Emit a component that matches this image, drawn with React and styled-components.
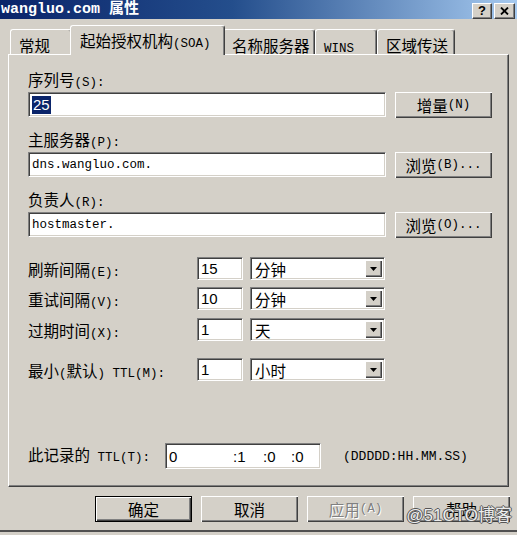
import styled, { createGlobalStyle } from "styled-components";

const GlobalStyle = createGlobalStyle`
  html, body {
    margin: 0;
    padding: 0;
    background: #d4d0c8;
  }
`;

const Window = styled.div`
  position: relative;
  width: 517px;
  height: 535px;
  display: flex;
  flex-direction: column;
  overflow: hidden;
  background: #d4d0c8;
  color: #000;
  font-family: "Noto Sans CJK SC", sans-serif;
  font-size: 15.5px;
`;

const TitleBar = styled.div`
  flex: none;
  height: 19px;
  display: flex;
  align-items: center;
  justify-content: space-between;
  padding: 0 2px 0 1px;
  background: linear-gradient(90deg, #0a246a 0%, #244e8c 45%, #a6caf0 100%);
`;

const TitleText = styled.div`
  color: #fff;
  font-family: "Liberation Mono", "Noto Sans CJK SC", monospace;
  font-weight: 700;
  font-size: 15px;
  line-height: 19px;
  white-space: nowrap;
`;

const CaptionButtons = styled.div`
  display: flex;
  gap: 2px;
  padding-top: 2px;
`;

const CaptionButton = styled.div`
  box-sizing: border-box;
  width: ${(p) => p.$w}px;
  height: 16px;
  display: flex;
  align-items: center;
  justify-content: center;
  background: #d4d0c8;
  border-top: 1px solid #fff;
  border-left: 1px solid #fff;
  border-right: 1px solid #404040;
  border-bottom: 1px solid #404040;
  box-shadow: inset -1px -1px #808080;
  font: 700 13px "Liberation Sans", sans-serif;
  line-height: 14px;
`;

const TabStrip = styled.div`
  flex: none;
  position: relative;
  z-index: 1;
  height: 29px;
  margin-top: 6px;
  padding-left: 10px;
  display: flex;
  align-items: flex-end;
`;

const Tab = styled.div`
  box-sizing: border-box;
  position: relative;
  z-index: ${(p) => (p.$active ? 2 : 1)};
  width: ${(p) => p.$w}px;
  height: ${(p) => (p.$active ? 30 : 25)}px;
  margin: 0 ${(p) => (p.$active ? -2 : 0)}px ${(p) => (p.$active ? -1 : 0)}px;
  padding: ${(p) => (p.$active ? "4px 0 0 9px" : "5px 0 0 8px")};
  background: #d4d0c8;
  border-top: 1px solid #fff;
  border-left: 1px solid #fff;
  border-right: 1px solid #404040;
  box-shadow: inset -1px 0 #808080;
  border-radius: 3px 3px 0 0;
  line-height: 20px;
  white-space: nowrap;
`;

const Mn = styled.span`
  font-family: "Liberation Mono", monospace;
  font-size: 12.5px;
`;

const Panel = styled.div`
  flex: none;
  box-sizing: border-box;
  height: 433px;
  margin: 0 8px;
  padding: 14px 0 0 19px;
  display: flex;
  flex-direction: column;
  border-top: 1px solid #fff;
  border-left: 1px solid #fff;
  border-right: 1px solid #404040;
  border-bottom: 1px solid #404040;
  box-shadow: inset -1px -1px #808080;
`;

const FieldGroup = styled.div`
  display: flex;
  flex-direction: column;
  gap: 3px;
  margin-bottom: 11px;
`;

const Label = styled.div`
  height: 20px;
  line-height: 20px;
  white-space: nowrap;
`;

const FieldRow = styled.div`
  display: flex;
  align-items: flex-start;
  gap: 9px;
`;

const sunken = `
  box-sizing: border-box;
  background: #fff;
  border-top: 1px solid #808080;
  border-left: 1px solid #808080;
  border-right: 1px solid #fff;
  border-bottom: 1px solid #fff;
  box-shadow: inset 1px 1px #404040, inset -1px -1px #d4d0c8;
`;

const raised = `
  box-sizing: border-box;
  background: #d4d0c8;
  box-shadow: inset 1px 1px #fff, inset -1px -1px #404040, inset -2px -2px #808080;
`;

const TextBox = styled.div`
  ${sunken}
  width: ${(p) => p.$w}px;
  height: ${(p) => p.$h || 25}px;
  display: flex;
  align-items: center;
  padding-left: 3px;
  font-family: ${(p) => (p.$mono ? '"Liberation Mono", monospace' : '"Liberation Sans", sans-serif')};
  font-size: ${(p) => (p.$mono ? 12.5 : 15)}px;
  white-space: nowrap;
  overflow: hidden;
`;

const Selected = styled.span`
  background: #0a246a;
  color: #fff;
  line-height: 18px;
  padding: 0 1px;
`;

const Button = styled.div`
  ${raised}
  width: ${(p) => p.$w || 97}px;
  height: 26px;
  display: flex;
  align-items: center;
  justify-content: center;
  line-height: 20px;
  white-space: nowrap;
  color: ${(p) => (p.$disabled ? "#808080" : "#000")};
  text-shadow: ${(p) => (p.$disabled ? "1px 1px #fff" : "none")};
  ${(p) => (p.$default ? "border: 1px solid #000;" : "")}
`;

const TimeRow = styled.div`
  display: grid;
  grid-template-columns: 162px 46px 135px;
  column-gap: 7px;
  align-items: center;
  height: 23px;
  margin-top: ${(p) => p.$mt}px;
`;

const Select = styled.div`
  ${sunken}
  height: 23px;
  display: flex;
  align-items: stretch;
  padding: 2px 2px 2px 0;
`;

const SelectValue = styled.div`
  flex: 1;
  padding-left: 4px;
  display: flex;
  align-items: center;
  line-height: 18px;
`;

const DropButton = styled.div`
  ${raised}
  width: 17px;
  display: flex;
  align-items: center;
  justify-content: center;
`;

const TtlRow = styled.div`
  display: flex;
  align-items: center;
  margin-top: 62px;
`;

const TtlLabel = styled.div`
  width: 137px;
  white-space: nowrap;
  line-height: 20px;
`;

const Seg = styled.span`
  display: inline-block;
  width: ${(p) => p.$w}px;
`;

const Hint = styled.div`
  margin-left: 22px;
  font-family: "Liberation Mono", monospace;
  font-size: 13px;
  white-space: nowrap;
`;

const ButtonBar = styled.div`
  flex: none;
  display: flex;
  justify-content: flex-end;
  gap: 9px;
  margin-top: 9px;
  padding-right: 7px;
`;

const FrameEdge = styled.div`
  flex: none;
  height: 2px;
  margin-top: 8px;
  background: #505050;
`;

const Watermark = styled.div`
  position: absolute;
  right: 5px;
  bottom: 9px;
  font-family: "Liberation Sans", "Noto Sans CJK SC", sans-serif;
  font-size: 17px;
  line-height: 20px;
  color: #ececec;
  text-shadow: -1px 0 #555, 1px 0 #555, 0 -1px #555, 0 1px #555;
  white-space: nowrap;
`;

const Arrow = () => (
  <svg width="7" height="4" viewBox="0 0 7 4">
    <path d="M0 0h7L3.5 4z" fill="#000" />
  </svg>
);

const CloseGlyph = () => (
  <svg width="9" height="8" viewBox="0 0 9 8">
    <path d="M1 0.5l7 7M8 0.5l-7 7" stroke="#000" strokeWidth="1.8" />
  </svg>
);

const fields = [
  { label: "序列号", key: "(S):", value: <Selected>25</Selected>, mono: false, btn: <>增量<Mn>(N)</Mn></> },
  { label: "主服务器", key: "(P):", value: "dns.wangluo.com.", mono: true, btn: <>浏览<Mn>(B)...</Mn></> },
  { label: "负责人", key: "(R):", value: "hostmaster.", mono: true, btn: <>浏览<Mn>(O)...</Mn></> },
];

const times = [
  { label: <>刷新间隔<Mn>(E):</Mn></>, n: "15", unit: "分钟", mt: 8 },
  { label: <>重试间隔<Mn>(V):</Mn></>, n: "10", unit: "分钟", mt: 7 },
  { label: <>过期时间<Mn>(X):</Mn></>, n: "1", unit: "天", mt: 8 },
  { label: <>最小<Mn>(</Mn>默认<Mn>) TTL(M):</Mn></>, n: "1", unit: "小时", mt: 17 },
];

export default function App() {
  return (
    <>
      <GlobalStyle />
      <Window>
        <TitleBar>
          <TitleText>wangluo.com 属性</TitleText>
          <CaptionButtons>
            <CaptionButton $w={20}>?</CaptionButton>
            <CaptionButton $w={21}>
              <CloseGlyph />
            </CaptionButton>
          </CaptionButtons>
        </TitleBar>

        <TabStrip>
          <Tab $w={62}>常规</Tab>
          <Tab $w={155} $active>
            起始授权机构<Mn>(SOA)</Mn>
          </Tab>
          <Tab $w={92}>名称服务器</Tab>
          <Tab $w={62}>
            <Mn>WINS</Mn>
          </Tab>
          <Tab $w={78}>区域传送</Tab>
        </TabStrip>

        <Panel>
          {fields.map((f) => (
            <FieldGroup key={f.label}>
              <Label>
                {f.label}
                <Mn>{f.key}</Mn>
              </Label>
              <FieldRow>
                <TextBox $w={358} $mono={f.mono}>
                  {f.value}
                </TextBox>
                <Button>{f.btn}</Button>
              </FieldRow>
            </FieldGroup>
          ))}

          {times.map((t, i) => (
            <TimeRow key={i} $mt={t.mt}>
              <Label>{t.label}</Label>
              <TextBox $w={46} $h={23}>
                {t.n}
              </TextBox>
              <Select>
                <SelectValue>{t.unit}</SelectValue>
                <DropButton>
                  <Arrow />
                </DropButton>
              </Select>
            </TimeRow>
          ))}

          <TtlRow>
            <TtlLabel>
              此记录的<Mn> TTL(T):</Mn>
            </TtlLabel>
            <TextBox $w={156} $h={26}>
              <Seg $w={64}>0</Seg>
              <Seg $w={30}>:1</Seg>
              <Seg $w={28}>:0</Seg>
              <Seg $w={20}>:0</Seg>
            </TextBox>
            <Hint>(DDDDD:HH.MM.SS)</Hint>
          </TtlRow>
        </Panel>

        <ButtonBar>
          <Button $default>确定</Button>
          <Button>取消</Button>
          <Button $disabled>
            应用<Mn>(A)</Mn>
          </Button>
          <Button>帮助</Button>
        </ButtonBar>
        <FrameEdge />

        <Watermark>@51CTO博客</Watermark>
      </Window>
    </>
  );
}
